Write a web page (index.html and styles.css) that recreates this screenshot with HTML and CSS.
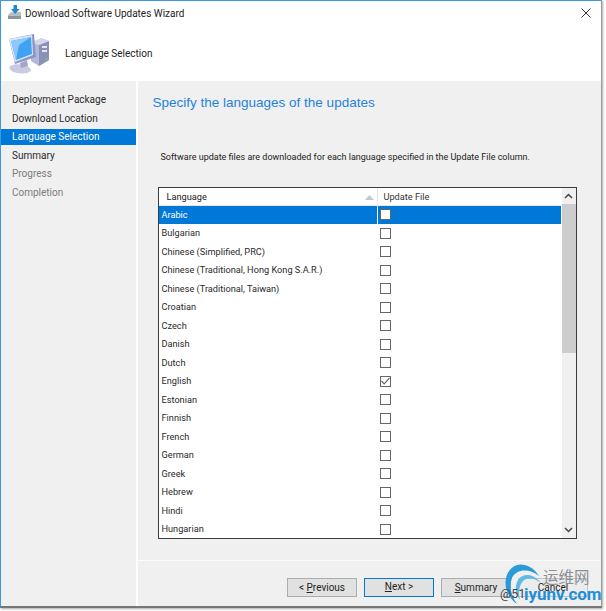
FILE: index.html
```html
<!DOCTYPE html>
<html lang="en">
<head>
<meta charset="utf-8">
<title>Download Software Updates Wizard</title>
<link rel="stylesheet" href="styles.css">
</head>
<body>
<div class="window">
  <div class="titlebar">
    <svg class="title-icon" width="16" height="16" viewBox="0 0 16 16">
      <path d="M1 10 L4 7 H14 V14 H1 Z" fill="#b9bec4"/>
      <path d="M1 11 H14 V14 H1 Z" fill="#8b949c"/>
      <rect x="11" y="12" width="2" height="1" fill="#5fc04a"/>
      <path d="M6.500 0 H10 V4 H12.500 L8.200 9 L4 4 H6.500 Z" fill="#1f86d6"/>
    </svg>
    <span class="title-text">Download Software Updates Wizard</span>
    <svg class="close" width="10" height="10" viewBox="0 0 10 10"><path d="M0.500 0.500 L9.500 9.500 M9.500 0.500 L0.500 9.500" stroke="#333" stroke-width="1" fill="none"/></svg>
  </div>
  <div class="header">
    <svg class="pc-icon" width="44" height="42" viewBox="0 0 44 42">
      <path d="M24 10 L34 5 L42 8 V27 L32 33 L24 28 Z" fill="#b4b8d8"/>
      <path d="M32 12 L42 8 V27 L32 33 Z" fill="#8b90b8"/>
      <path d="M24 10 L34 5 L42 8 L32 12 Z" fill="#d5d8ea"/>
      <rect x="35" y="13" width="5" height="2" fill="#e4e6f2"/>
      <rect x="35" y="17" width="5" height="2" fill="#e4e6f2"/>
      <rect x="38" y="25" width="2" height="2" fill="#6fce50"/>
      <path d="M3 33 C10 29 23 32 24 37 C24 40 16 41 10 40 C5 39 1 36 3 33 Z" fill="#c9cbe2"/>
      <path d="M13 30 L20 27 L21 33 L14 35 Z" fill="#a3a6c8"/>
      <path d="M2 6 L27 1 L29 24 L8 31 Z" fill="#8f95c6"/>
      <path d="M2 6 L25 2 L26 22 L8 29 Z" fill="#dce8fb"/>
      <path d="M4 8 L24 4 L25 21 L9 27 Z" fill="#3fa2f2"/>
      <path d="M4 8 L24 4 L12 12 L9 27 Z" fill="#8cc9fa"/>
    </svg>
    <span class="header-title">Language Selection</span>
  </div>
  <div class="body">
    <nav class="sidebar">
      <div class="step">Deployment Package</div>
      <div class="step">Download Location</div>
      <div class="step active">Language Selection</div>
      <div class="step">Summary</div>
      <div class="step muted">Progress</div>
      <div class="step muted">Completion</div>
    </nav>
    <div class="main">
      <div class="content">
        <h1 class="heading">Specify the languages of the updates</h1>
        <p class="desc">Software update files are downloaded for each language specified in the Update File column.</p>
        <div class="table">
          <div class="list">
            <div class="thead">
              <div class="col-lang">Language<svg class="sort" width="9" height="5" viewBox="0 0 9 5"><path d="M0 5 L4.500 0 L9 5 Z" fill="#c4c8cc"/></svg></div>
              <div class="col-file">Update File</div>
            </div>
            <div class="row selected"><div class="c-lang">Arabic</div><div class="c-file"><span class="box"></span></div></div>
            <div class="row"><div class="c-lang">Bulgarian</div><div class="c-file"><span class="box"></span></div></div>
            <div class="row"><div class="c-lang">Chinese (Simplified, PRC)</div><div class="c-file"><span class="box"></span></div></div>
            <div class="row"><div class="c-lang">Chinese (Traditional, Hong Kong S.A.R.)</div><div class="c-file"><span class="box"></span></div></div>
            <div class="row"><div class="c-lang">Chinese (Traditional, Taiwan)</div><div class="c-file"><span class="box"></span></div></div>
            <div class="row"><div class="c-lang">Croatian</div><div class="c-file"><span class="box"></span></div></div>
            <div class="row"><div class="c-lang">Czech</div><div class="c-file"><span class="box"></span></div></div>
            <div class="row"><div class="c-lang">Danish</div><div class="c-file"><span class="box"></span></div></div>
            <div class="row"><div class="c-lang">Dutch</div><div class="c-file"><span class="box"></span></div></div>
            <div class="row"><div class="c-lang">English</div><div class="c-file"><span class="box"><svg width="9" height="8" viewBox="0 0 9 8"><path d="M0.500 4 L3.200 6.800 L8.500 0.800" stroke="#666" stroke-width="1.200" fill="none"/></svg></span></div></div>
            <div class="row"><div class="c-lang">Estonian</div><div class="c-file"><span class="box"></span></div></div>
            <div class="row"><div class="c-lang">Finnish</div><div class="c-file"><span class="box"></span></div></div>
            <div class="row"><div class="c-lang">French</div><div class="c-file"><span class="box"></span></div></div>
            <div class="row"><div class="c-lang">German</div><div class="c-file"><span class="box"></span></div></div>
            <div class="row"><div class="c-lang">Greek</div><div class="c-file"><span class="box"></span></div></div>
            <div class="row"><div class="c-lang">Hebrew</div><div class="c-file"><span class="box"></span></div></div>
            <div class="row"><div class="c-lang">Hindi</div><div class="c-file"><span class="box"></span></div></div>
            <div class="row"><div class="c-lang">Hungarian</div><div class="c-file"><span class="box"></span></div></div>
          </div>
          <div class="scrollbar">
            <svg class="arrow" width="9" height="6" viewBox="0 0 9 6"><path d="M1 5 L4.500 1.500 L8 5" stroke="#444" stroke-width="1.500" fill="none"/></svg>
            <div class="track"><div class="thumb"></div></div>
            <svg class="arrow" width="9" height="6" viewBox="0 0 9 6"><path d="M1 1 L4.500 4.500 L8 1" stroke="#444" stroke-width="1.500" fill="none"/></svg>
          </div>
        </div>
      </div>
      <div class="footer">
        <div class="btn">&lt; <u>P</u>revious</div>
        <div class="btn default"><u>N</u>ext &gt;</div>
        <div class="btn"><u>S</u>ummary</div>
        <div class="btn cancel">Cancel</div>
      </div>
    </div>
  </div>
</div>
<div class="watermark">
  <svg class="swirl" width="40" height="42" viewBox="0 0 40 42">
    <path d="M36 13 C30 3 20 0 14 2 C5 5 1 15 3 25 C5 32 9 38 14 41 C8 33 6 23 9 15 C13 6 26 5 36 13 Z" fill="#2a9bd8"/>
    <path d="M38 20 C30 10 20 10 15 17 C11 24 13 32 17 37 C15 29 16 22 21 17 C27 14 33 16 38 20 Z" fill="#5cbce8"/>
  </svg>
  <span class="wm-cn">运维网</span>
  <span class="wm-at">@51</span>
  <span class="wm-url">iyunv.com</span>
</div>
</body>
</html>
```
FILE: styles.css
```css
* { box-sizing: border-box; }
html, body { margin: 0; padding: 0; background: #fff; }
body { width: 606px; height: 611px; position: relative; overflow: hidden; font-family: Roboto, "Noto Sans", sans-serif; color: #222; }
.window { width: 602px; height: 608px; background: #fff; border-top: 1px solid #3a9ae0; border-right: 1px solid #9a9a9a; border-bottom: 2px solid #777; border-left: 1px solid #3a9ae0; display: flex; flex-direction: column; box-shadow: 1px 1px 2px #aaa; }
.titlebar { height: 24px; display: flex; align-items: center; padding: 0 10px 0 6px; flex: none; }
.title-icon { flex: none; }
.title-text { font-size: 10px; margin-left: 2px; flex: 1; }
.close { flex: none; }
.header { height: 56px; flex: none; display: flex; align-items: center; padding: 0 0 0 6px; }
.pc-icon { flex: none; margin-top: 1px; }
.header-title { font-size: 10px; margin-left: 14px; }
.body { flex: 1; display: flex; min-height: 0; }
.sidebar { width: 135px; flex: none; background: #f0f0f0; padding-top: 11px; display: flex; flex-direction: column; gap: 3px; }
.step { height: 15.500px; line-height: 15.500px; padding-left: 11px; font-size: 10px; color: #2a2a2a; }
.step.active { background: #0078d7; color: #fff; }
.step.muted { color: #7d7d7d; }
.main { flex: 1; margin-left: 1.500px; background: #f0f0f0; display: flex; flex-direction: column; min-width: 0; }
.content { flex: none; height: 480px; padding: 12px 0 0 15px; border-bottom: 1px solid #fbfbfb; }
.heading { margin: 0; font-size: 13.500px; font-weight: 400; color: #1e82dc; line-height: 20px; font-family: "Liberation Sans", Arial, sans-serif; }
.desc { margin: 37px 0 0 8px; font-size: 9px; line-height: 14px; color: #222; }
.table { margin: 23px 0 0 5px; width: 419px; height: 352px; background: #fff; border: 1px solid #3c3c3c; display: flex; }
.list { flex: 1; min-width: 0; overflow: hidden; }
.thead { height: 17.500px; display: flex; font-size: 9.200px; line-height: 17px; border-bottom: 1px solid #e8e8e8; }
.col-lang { width: 219px; padding-left: 8px; position: relative; border-right: 1px solid #e4e4e4; }
.sort { position: absolute; right: 3px; top: 7px; }
.col-file { padding-left: 6px; flex: 1; color: #333; }
.row { height: 18.500px; display: flex; font-size: 9.200px; line-height: 18.500px; color: #2a2a2a; }
.row.selected { background: #0078d7; color: #fff; }
.c-lang { width: 219px; padding-left: 3px; border-right: 1px solid #fff; }
.c-file { flex: 1; padding-left: 2px; display: flex; align-items: center; }
.box { width: 11px; height: 11px; border: 1px solid #666; background: #fff; display: flex; align-items: center; justify-content: center; flex: none; }
.scrollbar { width: 14px; margin-left: 1px; flex: none; background: #f0f0f0; display: flex; flex-direction: column; align-items: center; }
.arrow { flex: none; margin: 5px 0; }
.track { flex: 1; width: 100%; }
.thumb { height: 149px; background: #cdcdcd; }
.footer { flex: 1; display: flex; align-items: flex-start; gap: 7px; padding: 17px 0 0 149.500px; }
.btn { width: 70px; height: 19px; flex: none; background: #e1e1e1; border: 1px solid #adadad; font-size: 10px; line-height: 17px; text-align: center; color: #222; }
.btn.default { border: 1.500px solid #0078d7; line-height: 16px; }
.btn.cancel { background: #ececec; border-color: #c4c4c4; }
.watermark { position: absolute; left: 503px; top: 563px; width: 103px; height: 48px; }
.swirl { position: absolute; left: 0; top: 0; }
.wm-cn { position: absolute; left: 40px; top: 4px; font-size: 15.500px; line-height: 18px; color: #8a8f96; font-family: "Noto Sans CJK SC", sans-serif; }
.wm-at { position: absolute; left: -3px; top: 22px; font-size: 12.500px; line-height: 17px; color: #444; }
.wm-url { position: absolute; left: 21px; top: 22px; font-size: 17px; line-height: 19px; color: #1f8fd6; font-weight: 700; }
```
